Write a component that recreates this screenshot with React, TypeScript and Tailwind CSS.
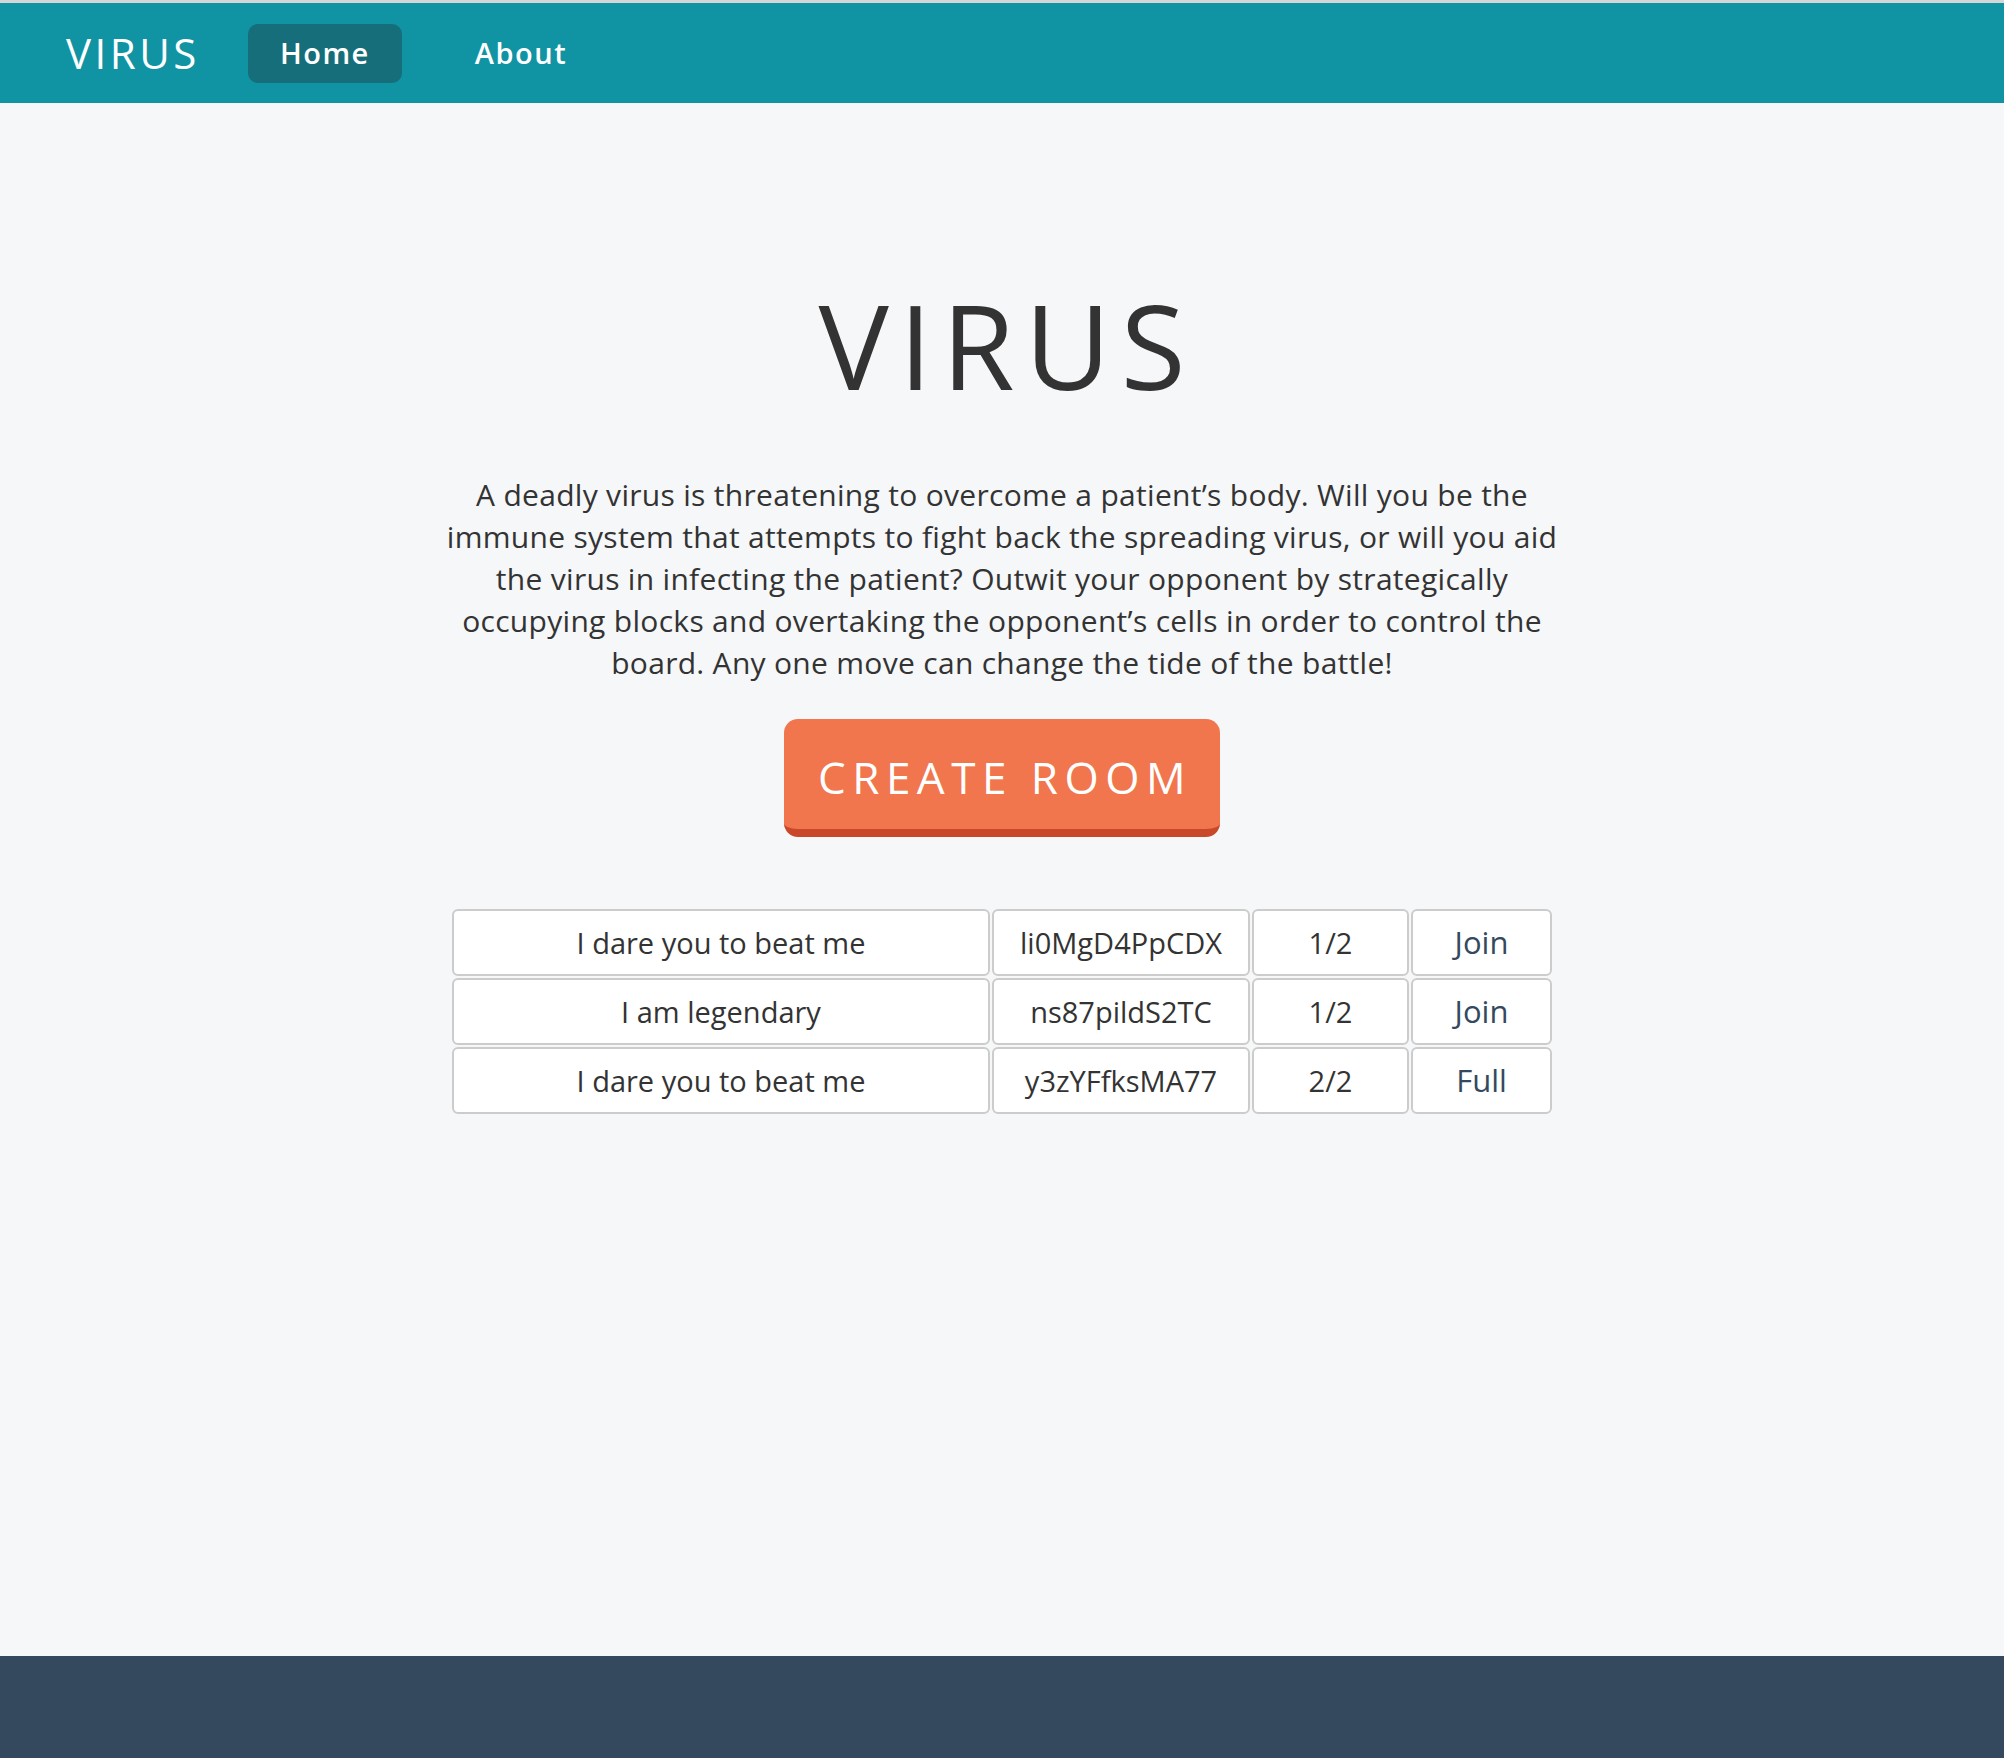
import React from 'react';

type Room = { name: string; code: string; players: string; status: string };

const rooms: Room[] = [
  { name: 'I dare you to beat me', code: 'li0MgD4PpCDX', players: '1/2', status: 'Join' },
  { name: 'I am legendary', code: 'ns87pildS2TC', players: '1/2', status: 'Join' },
  { name: 'I dare you to beat me', code: 'y3zYFfksMA77', players: '2/2', status: 'Full' },
];

const font = { fontFamily: '"Open Sans", "Noto Sans", sans-serif' };

const App: React.FC = () => {
  return (
    <div className="min-h-screen flex flex-col bg-[#f6f7f9] text-[#333333]" style={font}>
      {/* Navbar */}
      <nav className="border-t-[3px] border-[#d6d6d6] bg-[#1093a3] h-[103px] flex items-center pl-[66px]">
        <span className="text-white text-[42px] leading-none tracking-[3.5px]">VIRUS</span>
        <a className="ml-[48px] bg-[#156e79] rounded-[10px] h-[59px] w-[154px] flex items-center justify-center text-white text-[29px] font-semibold tracking-[1.5px]">
          Home
        </a>
        <a className="ml-[73px] text-white text-[29px] font-semibold tracking-[1.5px]">About</a>
      </nav>

      {/* Main */}
      <main className="flex-1 flex flex-col items-center pt-[183px]">
        <h1 className="text-[118px] leading-none font-normal tracking-[10px] pl-[10px]">VIRUS</h1>

        <p className="mt-[70px] text-[30px] leading-[42px] tracking-[0.3px] text-center">
          A deadly virus is threatening to overcome a patient’s body. Will you be the
          <br />
          immune system that attempts to fight back the spreading virus, or will you aid
          <br />
          the virus in infecting the patient? Outwit your opponent by strategically
          <br />
          occupying blocks and overtaking the opponent’s cells in order to control the
          <br />
          board. Any one move can change the tide of the battle!
        </p>

        <button className="mt-[35px] w-[436px] h-[118px] rounded-[14px] bg-[#f1764d] border-b-[8px] border-[#c9482a] text-white text-[44px] tracking-[6.5px] pl-[6px] pt-[6px]">
          CREATE ROOM
        </button>

        <table className="mt-[70px] w-[1104px] border-separate border-spacing-[2px] text-[29px]">
          <tbody>
            {rooms.map((room, i) => (
              <tr key={i}>
                <td className="w-[538px] h-[67px] bg-white border-2 border-[#cccccc] rounded-[6px] text-center">{room.name}</td>
                <td className="w-[258px] h-[67px] bg-white border-2 border-[#cccccc] rounded-[6px] text-center">{room.code}</td>
                <td className="w-[157px] h-[67px] bg-white border-2 border-[#cccccc] rounded-[6px] text-center">{room.players}</td>
                <td className="h-[67px] bg-white border-2 border-[#cccccc] rounded-[6px] text-center text-[#34495e] text-[31px]">{room.status}</td>
              </tr>
            ))}
          </tbody>
        </table>
      </main>

      {/* Footer */}
      <footer className="h-[102px] bg-[#34495e]" />
    </div>
  );
};

export default App;
